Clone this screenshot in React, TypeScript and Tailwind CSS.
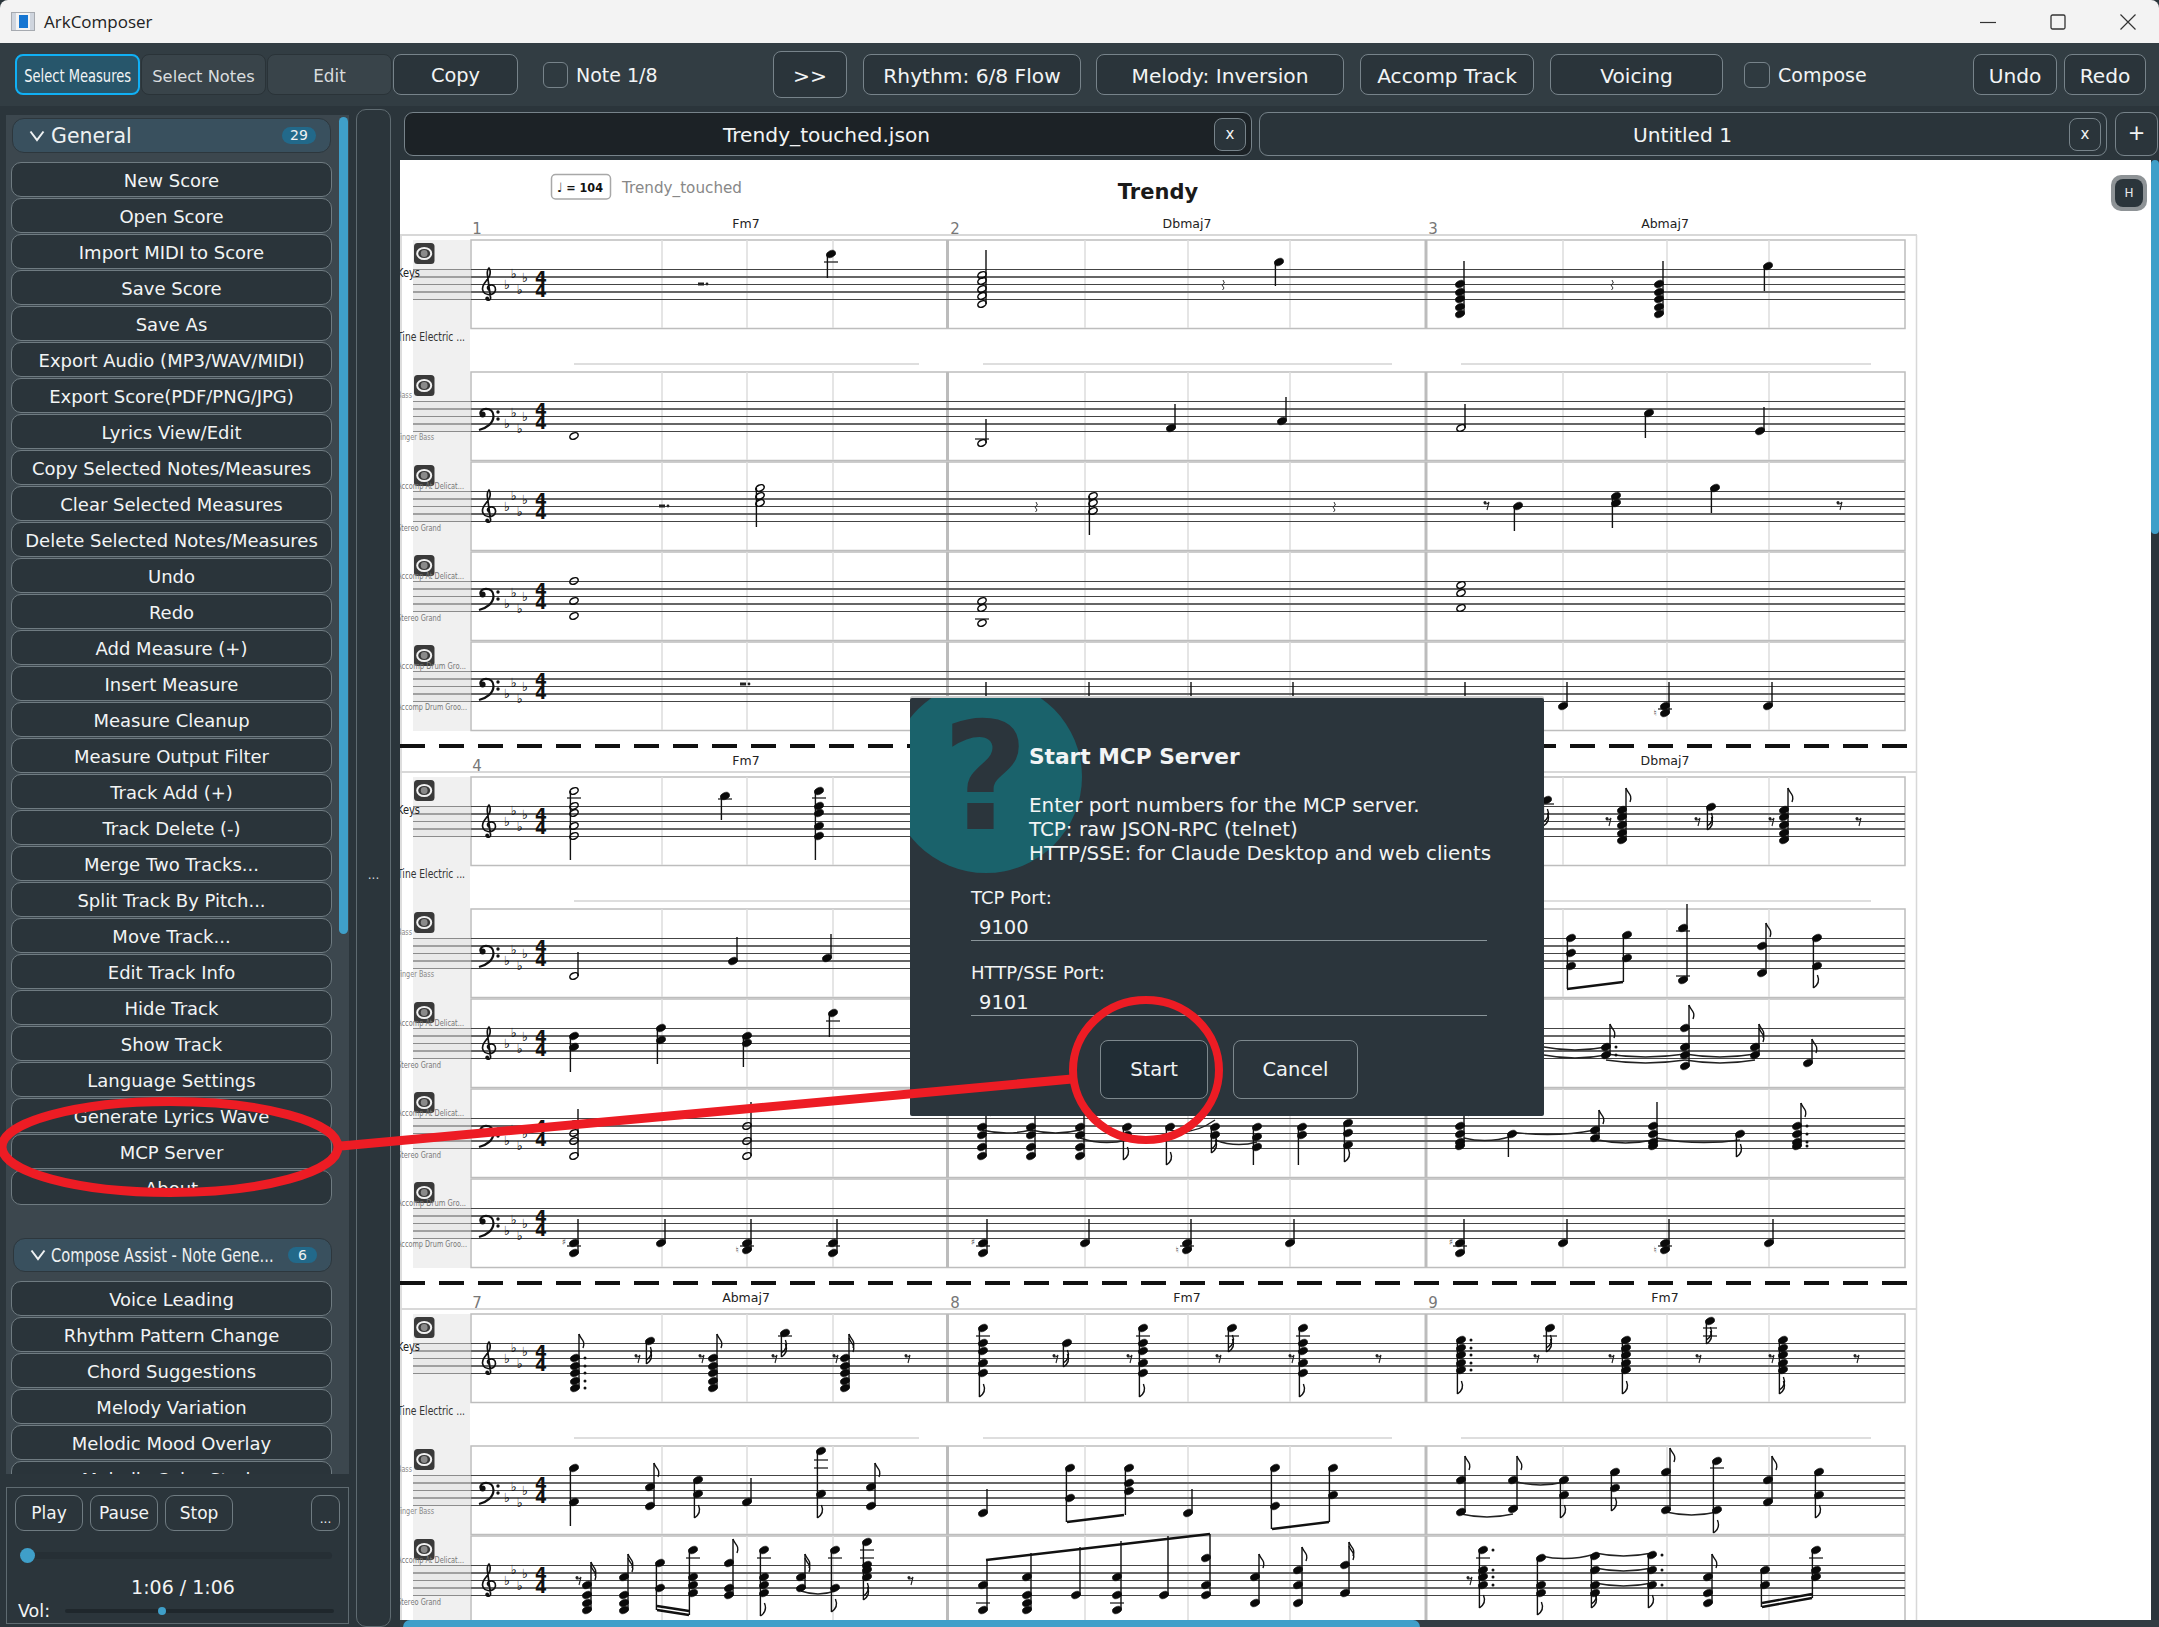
import React from 'react';

// note tuple: x, note ys, stem tip y (0 = no stem), flags, options
type Opt = { o?: number; l?: number[]; d?: number };
type Note = [number, number[], number, number?, Opt?];

const generalItems = [
  'New Score', 'Open Score', 'Import MIDI to Score', 'Save Score', 'Save As', 'Export Audio (MP3/WAV/MIDI)',
  'Export Score(PDF/PNG/JPG)', 'Lyrics View/Edit', 'Copy Selected Notes/Measures', 'Clear Selected Measures',
  'Delete Selected Notes/Measures', 'Undo', 'Redo', 'Add Measure (+)', 'Insert Measure', 'Measure Cleanup',
  'Measure Output Filter', 'Track Add (+)', 'Track Delete (-)', 'Merge Two Tracks...', 'Split Track By Pitch...',
  'Move Track...', 'Edit Track Info', 'Hide Track', 'Show Track', 'Language Settings', 'Generate Lyrics Wave',
  'MCP Server', 'About',
];
const composeItems = ['Voice Leading', 'Rhythm Pattern Change', 'Chord Suggestions', 'Melody Variation', 'Melodic Mood Overlay', 'Melodic Color Study'];

const barBtn = 'h-[41px] flex items-center justify-center rounded-[8px] whitespace-nowrap shrink-0';
const darkBtn = `${barBtn} pt-[3px] border-[1.5px] border-[#77838a] bg-[#2a343a] text-[#f2f4f5] text-[20.2px]`;
const modeBtn = `${barBtn} pt-[5px] border-[1.5px] bg-[#39444a] border-[#2a3338] text-[#d9dddf]`;
const sideBtn = 'h-[35px] mb-[1px] pt-[2px] w-[321px] ml-[5px] flex items-center justify-center rounded-[10px] border-[1.5px] border-[#6f7b81] bg-[#2a343a] text-[#f2f4f5] text-[18px] whitespace-nowrap shrink-0';
const playBtn = 'h-[36px] w-[68px] pt-[1px] flex items-center justify-center rounded-[9px] border-[1.5px] border-[#6f7b81] text-[#f2f4f5] text-[17px]';

// ---- score data, all in page pixels ----
const trackTops = [240, 372, 462, 552, 642];
const sysOffsets = [0, 537, 1074];
const beats = [662, 747, 833, 1085, 1188, 1290, 1563, 1667, 1769];
// upper label, its offset, width; lower label, its offset, width; colour; size
const trackLabels: [string, number, number, string, number, number, string, number][] = [
  ['Keys', 3, 23, 'Tine Electric ...', 67, 68, '#333', 11.5],
  ['Bass', -8, 15, 'Finger Bass', 34, 37, '#888', 8.5],
  ['Accomp At Delicat...', -7, 67, 'Stereo Grand', 35, 44, '#777', 9.5],
  ['Accomp At Delicat...', -7, 67, 'Stereo Grand', 35, 44, '#777', 9.5],
  ['Accomp Drum Gro...', -7, 69, 'Accomp Drum Groo...', 34, 70, '#777', 9.5],
];
const chordNames: [string, number, number][] = [
  ['Fm7', 746, 223], ['Dbmaj7', 1187, 223], ['Abmaj7', 1665, 223],
  ['Fm7', 746, 760], ['Dbmaj7', 1665, 760],
  ['Abmaj7', 746, 1297], ['Fm7', 1187, 1297], ['Fm7', 1665, 1297],
];
const barNumbers: [string, number, number][] = [
  ['1', 477, 228], ['2', 955, 228], ['3', 1433, 228], ['4', 477, 765], ['7', 477, 1302], ['8', 955, 1302], ['9', 1433, 1302],
];
const electricGaps: [number, number][] = [[574, 919], [983, 1392], [1461, 1871]];

const s3a = [1358, 1366, 1373, 1381, 1388];
const s3b = [1328, 1343, 1351, 1363, 1373];
const s3c = [1340, 1348, 1355, 1363, 1370];
const s2c = [1127, 1135, 1147, 1156];
const s2top = [810, 817, 825, 833, 840];

const notes: Note[] = [
  // system 1
  [982, [275, 281, 289, 296, 304], 250, 0, { o: 1 }], [831, [254], 278, 0, { l: [262] }], [1279, [262], 286],
  [1460, [284, 292, 299, 307, 314], 261], [1659, [284, 292, 299, 307, 314], 261], [1768, [266], 291],
  [574, [436], 0, 0, { o: 1 }], [982, [443], 419, 0, { o: 1, l: [439] }], [1171, [428], 404], [1282, [421], 397],
  [1461, [428], 404, 0, { o: 1 }], [1649, [413], 438], [1760, [431], 407],
  [760, [488, 496, 503], 527, 0, { o: 1 }], [1093, [496, 503, 511], 535, 0, { o: 1 }], [1518, [506], 531], [1616, [496, 503], 528], [1715, [488], 513],
  [574, [581, 601, 616], 0, 0, { o: 1 }], [982, [601, 608, 623], 0, 0, { o: 1, l: [619] }], [1461, [585, 593, 608], 0, 0, { o: 1 }],
  [982, [706], 682], [1085, [706], 682], [1187, [706], 682], [1289, [706], 682], [1461, [706], 682],
  [1563, [706], 682], [1665, [706, 713], 682, 0, { l: [709] }], [1768, [706], 682],
  // system 2
  [574, [791, 806, 813, 826, 836], 860, 0, { o: 1, l: [798] }], [725, [796], 820, 0, { l: [799] }], [819, [791, 806, 813, 826, 836], 860, 0, { l: [798] }],
  [1547, [800], 826, 2, { l: [804] }], [1622, s2top, 788, 1], [1711, [807], 830, 2], [1784, s2top, 788, 1],
  [574, [976], 952, 0, { o: 1 }], [733, [961], 937], [827, [958], 934],
  [1571, [938, 953, 966], 989], [1627, [935, 958], 982], [1683, [928, 980], 904, 0, { l: [931, 976] }], [1762, [946, 973], 923, 1], [1817, [938, 966], 988, 1],
  [574, [1036, 1047], 1072], [661, [1028, 1040], 1064], [747, [1036, 1043], 1067], [833, [1013], 1037, 0, { l: [1021] }],
  [1606, [1047, 1055], 1024, 1, { d: 1 }], [1685, [1028, 1047, 1055, 1066], 1005, 1], [1755, [1047, 1055], 1024, 2], [1808, [1063], 1039, 1],
  [574, [1124, 1133, 1141, 1156], 1109, 0, { o: 1 }], [747, [1126, 1141, 1156], 1102, 0, { o: 1 }],
  [982, s2c, 1102, 1], [1031, s2c, 1102], [1080, s2c, 1102], [1127, [1127, 1135], 1160, 1], [1170, [1127], 1165, 1], [1215, [1127, 1135], 1153, 2], [1257, [1127, 1137, 1147], 1165], [1302, [1127, 1135], 1165], [1348, [1123, 1133, 1145], 1162, 1],
  [1460, [1126, 1134, 1142, 1146], 1102, 1], [1512, [1134], 1157], [1595, [1130, 1138], 1110, 1], [1653, [1126, 1134, 1142, 1146], 1102], [1740, [1134], 1157, 1], [1797, [1126, 1134, 1142, 1146], 1103, 1, { d: 1 }],
  [574, [1243, 1253], 1219, 0, { l: [1246] }], [661, [1243], 1219], [747, [1243, 1250], 1219, 0, { l: [1246] }], [833, [1243, 1253], 1219, 0, { l: [1246] }],
  [983, [1243, 1253], 1219, 0, { l: [1246] }], [1085, [1243], 1219], [1187, [1243, 1250], 1219, 0, { l: [1246] }], [1290, [1243], 1219],
  [1460, [1243, 1253], 1219, 0, { l: [1246] }], [1563, [1243], 1219], [1665, [1243, 1250], 1219, 0, { l: [1246] }], [1769, [1243], 1219],
  // system 3
  [575, s3a, 1334, 1, { d: 1 }], [650, [1341], 1364, 2], [713, s3a, 1334, 1], [785, [1333], 1357, 2, { l: [1336] }], [845, s3a, 1334, 2],
  [983, s3b, 1397, 1, { l: [1336] }], [1067, [1343], 1367, 2], [1143, s3b, 1397, 1, { l: [1336] }], [1232, [1328], 1352, 2, { l: [1336] }], [1303, s3b, 1397, 1, { l: [1336] }],
  [1461, s3c, 1394, 1, { d: 1 }], [1550, [1328], 1352, 2, { l: [1336] }], [1626, s3c, 1394, 1], [1710, [1321], 1344, 2, { l: [1328, 1336] }], [1783, s3c, 1394, 2],
  [574, [1468, 1502], 1526], [650, [1487, 1506], 1463, 1], [698, [1480, 1494], 1518, 1], [747, [1502], 1478], [821, [1451, 1494], 1518, 1, { l: [1460, 1468] }], [871, [1487, 1506], 1463, 1],
  [983, [1513], 1489], [1070, [1468, 1498], 1522], [1129, [1468, 1483, 1491], 1515], [1188, [1513], 1489], [1275, [1468, 1506], 1529], [1333, [1468, 1495], 1522],
  [1461, [1480, 1512], 1456, 1], [1513, [1480, 1509], 1456, 1], [1564, [1480, 1495], 1518, 1], [1615, [1472, 1488], 1511, 1], [1666, [1472, 1510], 1448, 1],
  [1717, [1461, 1510], 1533, 1, { l: [1468] }], [1768, [1480, 1502], 1456, 1], [1819, [1472, 1495], 1518, 1],
  [587, [1585, 1595, 1603, 1610], 1562, 2], [624, [1577, 1595, 1603, 1610], 1554, 2], [660, [1563, 1588], 1610], [693, [1550, 1577, 1585, 1593], 1615, 0, { l: [1558] }],
  [729, [1563, 1588, 1595], 1539, 1], [764, [1550, 1577, 1585, 1593], 1616, 1, { l: [1558] }], [801, [1577, 1588], 1554, 2], [835, [1550, 1588], 1612, 1, { l: [1558] }], [867, [1542, 1565, 1570, 1577], 1600, 2, { l: [1550, 1558] }],
  [983, [1585, 1610], 1560, 0, { l: [1603] }], [1027, [1577, 1595, 1603, 1610], 1553], [1076, [1595], 1547], [1117, [1577, 1595, 1610], 1541, 0, { l: [1603] }], [1164, [1595], 1536], [1206, [1558, 1585, 1595], 1534],
  [1255, [1577, 1603], 1554, 1], [1298, [1570, 1585, 1603], 1547, 1], [1345, [1565, 1593], 1542, 2],
  [1483, [1550, 1570, 1577, 1585], 1608, 1, { l: [1558], d: 1 }], [1541, [1558, 1585, 1593], 1615, 1], [1595, [1556, 1570, 1585, 1593], 1608, 2], [1652, [1555, 1570, 1585], 1608, 1, { d: 1 }],
  [1708, [1577, 1593, 1603], 1554, 1], [1765, [1570, 1585], 1607], [1816, [1550, 1570, 1577], 1598, 0, { l: [1558] }],
];

const beams: number[][] = [
  [1567, 989, 1623, 982], [1067, 1522, 1124, 1515], [1272, 1529, 1329, 1522],
  [657, 1610, 689, 1615], [657, 1606, 689, 1611], [986, 1560, 1210, 1534], [1762, 1607, 1812, 1598], [1762, 1603, 1812, 1594],
];
const ties: number[][] = [
  [982, 1130, 1031, 1130], [1031, 1130, 1080, 1130], [1080, 1138, 1127, 1140], [1170, 1130, 1215, 1120], [1215, 1140, 1257, 1142],
  [1464, 1138, 1512, 1136], [1512, 1132, 1595, 1130], [1598, 1140, 1653, 1140], [1656, 1138, 1740, 1140],
  [1544, 1047, 1606, 1047], [1544, 1055, 1606, 1055], [1606, 1054, 1685, 1054], [1606, 1060, 1685, 1060], [1685, 1054, 1755, 1054], [1685, 1060, 1755, 1060],
  [1461, 1514, 1513, 1514], [1517, 1482, 1564, 1482], [1666, 1512, 1717, 1512], [801, 1591, 835, 1591],
  [1541, 1556, 1595, 1554], [1595, 1553, 1652, 1553], [1595, 1568, 1652, 1568], [1595, 1583, 1652, 1583],
];
const eighthRests: [number, number][] = [
  [1487, 505], [1840, 505], [1609, 821], [1698, 821], [1772, 821], [1859, 821],
  [638, 1358], [702, 1358], [775, 1358], [836, 1358], [908, 1358], [1056, 1358], [1130, 1358], [1219, 1358], [1292, 1358], [1379, 1358],
  [1537, 1358], [1612, 1358], [1699, 1358], [1772, 1358], [1857, 1358], [579, 1580], [911, 1580], [1470, 1580],
];
const smallRests: [number, number][] = [[1223, 285], [1612, 285], [1036, 507], [1334, 507]];
const dotRests: [number, number][] = [[703, 284], [745, 684], [664, 506]];
const marks: [string, number, number][] = [
  ['♯', 564, 1245], ['♮', 737, 1253], ['♯', 973, 1245], ['♮', 1177, 1253], ['♯', 1451, 1245], ['♮', 1655, 1253], ['♮', 1655, 716],
];

const TrebleClef = ({ x, y }: { x: number; y: number }) => (
  <g transform={`translate(${x} ${y})`}>
    <path d="M9.5 24 C6.5 24 5.5 20.5 8 19 C11.5 17 15 20 14.5 23.5 C14 27 10.5 28.5 7 28 C2.5 27.5 .5 23.5 2 19.5 C3.5 15.5 7 13 8.5 9.5 C9.5 7 9.5 3 8 1.5 C6.5 3 6 6 6.5 9 L9.5 31 C10 34 6.5 34.5 5.5 32.5" fill="none" stroke="#111" strokeWidth="1.7" />
    <circle cx="6.2" cy="32" r="1.9" fill="#111" />
  </g>
);

const BassClef = ({ x, y }: { x: number; y: number }) => (
  <g transform={`translate(${x} ${y})`}>
    <path d="M1 22 C9 20 15.5 15 15.5 8 C15.5 3 12 .8 8 .8 C4.5 .8 2 3 2.5 6" fill="none" stroke="#111" strokeWidth="2.2" />
    <circle cx="4.6" cy="6.4" r="3" fill="#111" />
    <circle cx="20" cy="4" r="1.7" fill="#111" />
    <circle cx="20" cy="11" r="1.7" fill="#111" />
  </g>
);

const Eye = ({ y }: { y: number }) => (
  <g>
    <rect x="414" y={y} width="20.5" height="21" rx="3.5" fill="#3a3a3a" />
    <ellipse cx="424.2" cy={y + 10.5} rx="7" ry="5.6" fill="none" stroke="#f2f2f2" strokeWidth="2" />
    <circle cx="424.2" cy={y + 10.5} r="3.4" fill="#8a8a8a" />
  </g>
);

const NoteGlyph = ({ n }: { n: Note }) => {
  const [x, ys, tip, flags = 0, opt = {}] = n;
  const up = tip !== 0 && tip < ys[0];
  const sx = up ? x + 4 : x - 3.6;
  const far = up ? ys[ys.length - 1] : ys[0];
  return (
    <g>
      {(opt.l || []).map((l, i) => <line key={i} x1={x - 7} x2={x + 7} y1={l} y2={l} stroke="#333" strokeWidth="1.4" />)}
      {tip !== 0 && <line x1={sx} x2={sx} y1={far} y2={tip} stroke="#111" strokeWidth="1.4" />}
      {Array.from({ length: flags }).map((_, i) => {
        const t = up ? tip + i * 4 : tip - i * 4;
        const d = up
          ? `M${sx} ${t} C${sx + 1} ${t + 5} ${sx + 7} ${t + 6} ${sx + 4} ${t + 14}`
          : `M${sx} ${t} C${sx + 3} ${t - 2} ${sx + 7} ${t - 6} ${sx + 4} ${t - 13}`;
        return <path key={i} d={d} fill="none" stroke="#111" strokeWidth="1.4" />;
      })}
      {ys.map((y, i) => (
        <ellipse key={i} cx={x} cy={y} rx={opt.o ? 4.4 : 4.8} ry={opt.o ? 3 : 3.3} transform={`rotate(-25 ${x} ${y})`}
          fill={opt.o ? 'none' : '#0a0a0a'} stroke="#0a0a0a" strokeWidth={opt.o ? 1.5 : 0.6} />
      ))}
      {opt.d && ys.map((y, i) => <circle key={i} cx={x + 10} cy={y} r="1.5" fill="#111" />)}
    </g>
  );
};

const ScoreSheet = () => (
  <svg width="1751" height="1460" viewBox="400 160 1751 1460" className="block bg-white" style={{ fontFamily: "'DejaVu Sans', sans-serif" }}>
    <rect x="551.5" y="174.5" width="59" height="24.5" rx="4" fill="#fff" stroke="#a8a8a8" strokeWidth="1.5" />
    <text x="557" y="192" fontSize="13" fontWeight="700" fill="#111" textLength="46" lengthAdjust="spacingAndGlyphs">♩ = 104</text>
    <text x="622" y="193" fontSize="15.5" fill="#888" textLength="120" lengthAdjust="spacingAndGlyphs">Trendy_touched</text>
    <text x="1158" y="199" fontSize="21" fontWeight="700" fill="#1a1a1a" textAnchor="middle">Trendy</text>

    <line x1="401" x2="401" y1="235" y2="1620" stroke="#d2d2d2" strokeWidth="1.5" />
    <line x1="1916.5" x2="1916.5" y1="235" y2="1620" stroke="#d8d8d8" strokeWidth="1.5" />
    <line x1="400" x2="1917" y1="746" y2="746" stroke="#111" strokeWidth="4" strokeDasharray="25 14" />
    <line x1="400" x2="1917" y1="1283" y2="1283" stroke="#111" strokeWidth="4" strokeDasharray="25 14" />

    {sysOffsets.map((off) => (
      <g key={off}>
        <line x1="400" x2="1917" y1={235 + off} y2={235 + off} stroke="#d8d8d8" strokeWidth="2" />
        <rect x="413" y={240 + off} width="57" height="491" fill="#f0f0f0" />
        {electricGaps.map(([a, b]) => <line key={a} x1={a} x2={b} y1={364 + off} y2={364 + off} stroke="#dedede" strokeWidth="2" />)}
        {trackTops.map((t, ti) => {
          const top = t + off;
          const s = top + 29.5;
          const treble = ti === 0 || ti === 2;
          const [a, aOff, aLen, b, bOff, bLen, col, fs] = trackLabels[ti];
          return (
            <g key={t}>
              <rect x="413" y={s} width="58" height="30" fill="#e3e3e3" />
              <rect x="471" y={top} width="1434" height="88.5" fill="#fff" stroke="#bdbdbd" strokeWidth="1.5" />
              {beats.map((bx) => <line key={bx} x1={bx} x2={bx} y1={top} y2={top + 88} stroke="#dcdcdc" strokeWidth="1.5" />)}
              <line x1="947.5" x2="947.5" y1={top} y2={top + 88} stroke="#bcbcbc" strokeWidth="3" />
              <line x1="1426" x2="1426" y1={top} y2={top + 88} stroke="#bcbcbc" strokeWidth="3" />
              {[0, 1, 2, 3, 4].map((l) => (
                <line key={l} x1="413" x2="1905" y1={s + l * 7.5} y2={s + l * 7.5} stroke={l % 2 ? '#666' : '#444'} strokeWidth={l % 2 ? 1.9 : 1.2} />
              ))}
              <rect x="413" y={s - 1} width="58" height="32" fill="#f0f0f0" opacity="0.42" />
              {treble ? <TrebleClef x={481} y={s - 3} /> : <BassClef x={478} y={s + 6.5} />}
              {(treble ? [4, 8, 15, 20] : [11.5, 15.5, 22.5, 27.5]).map((dy, i) => (
                <text key={i} x={[513.6, 525, 507, 519.6][i]} y={s + dy + 4} fontSize="12.5" fill="#000" textAnchor="middle">♭</text>
              ))}
              <text x="541" y={s + 14.5} fontSize="17" fontWeight="700" fill="#111" textAnchor="middle">4</text>
              <text x="541" y={s + 27.5} fontSize="17" fontWeight="700" fill="#111" textAnchor="middle">4</text>
              <Eye y={top + 3} />
              <text x="397" y={s + aOff + 4} fontSize={ti === 1 ? 8.5 : ti === 0 ? 11.5 : fs} fill={ti === 0 ? '#222' : col} textLength={aLen} lengthAdjust="spacingAndGlyphs">{a}</text>
              <text x="397" y={s + bOff + 4} fontSize={fs} fill={col} textLength={bLen} lengthAdjust="spacingAndGlyphs">{b}</text>
            </g>
          );
        })}
      </g>
    ))}

    {chordNames.map(([t, x, y], i) => <text key={i} x={x} y={y + 4.5} fontSize="12.5" fill="#222" textAnchor="middle">{t}</text>)}
    {barNumbers.map(([t, x, y], i) => <text key={i} x={x} y={y + 5.5} fontSize="15" fill="#777" textAnchor="middle">{t}</text>)}

    {ties.map(([a, b, c, d], i) => <path key={i} d={`M${a} ${b} Q${(a + c) / 2} ${Math.max(b, d) + 6} ${c} ${d}`} fill="none" stroke="#222" strokeWidth="1.4" />)}
    {beams.map(([a, b, c, d], i) => <line key={i} x1={a} y1={b} x2={c} y2={d} stroke="#111" strokeWidth="2.4" />)}
    {notes.map((n, i) => <NoteGlyph key={i} n={n} />)}
    {eighthRests.map(([x, y], i) => (
      <g key={i}>
        <circle cx={x - 2} cy={y - 2.5} r="1.5" fill="#222" />
        <path d={`M${x - 3} ${y - 1.5} Q${x} ${y} ${x + 2} ${y - 3} L${x} ${y + 5}`} fill="none" stroke="#222" strokeWidth="1.1" />
      </g>
    ))}
    {smallRests.map(([x, y], i) => <path key={i} d={`M${x} ${y - 5} L${x + 1.4} ${y - 2} L${x - 1} ${y} L${x + 1} ${y + 3} L${x - .5} ${y + 5}`} fill="none" stroke="#333" strokeWidth="1" />)}
    {dotRests.map(([x, y], i) => (
      <g key={i}><rect x={x - 5} y={y - 1.5} width="6" height="3" fill="#222" /><circle cx={x + 4} cy={y} r="1.4" fill="#222" /></g>
    ))}
    {marks.map(([t, x, y], i) => <text key={i} x={x} y={y} fontSize="9" fill="#444" textAnchor="middle">{t}</text>)}
  </svg>
);

const Dialog = () => (
  <div className="absolute left-[910px] top-[698px] w-[634px] h-[418px] bg-[#2b353c] rounded-[2px] shadow-[0_-2px_0_#cfcfcf] overflow-hidden text-[#f2f4f5]">
    <div className="absolute left-[-20px] top-[-17px] w-[192px] h-[192px] rounded-full bg-[#1a626b]" />
    <div className="absolute left-[32px] top-[-10px] text-[149px] leading-[180px] font-bold text-[#2b353c]">?</div>
    <div className="relative pl-[119px] pt-[46px]">
      <div className="text-[21.7px] leading-[26px] font-bold whitespace-nowrap">Start MCP Server</div>
      <div className="mt-[24px] text-[19.9px] leading-[24px] whitespace-nowrap">
        <div>Enter port numbers for the MCP server.</div>
        <div>TCP: raw JSON-RPC (telnet)</div>
        <div>HTTP/SSE: for Claude Desktop and web clients</div>
      </div>
    </div>
    <div className="relative ml-[61px] w-[516px] mt-[21px] text-[18px]">
      <div className="leading-[22px]">TCP Port:</div>
      <div className="mt-[8px] h-[23px] leading-[22px] text-[19.5px] pl-[8px] border-b-[1.5px] border-[#8a959a] box-content">9100</div>
      <div className="mt-[21px] leading-[22px]">HTTP/SSE Port:</div>
      <div className="mt-[8px] h-[23px] leading-[22px] text-[19.5px] pl-[8px] border-b-[1.5px] border-[#8a959a] box-content">9101</div>
    </div>
    <div className="relative flex ml-[190px] mt-[24px] gap-[25px] text-[19.5px]">
      <div className="w-[108px] h-[59px] flex items-center justify-center rounded-[8px] border-[1.5px] border-[#7d888d] bg-[#212d35]">Start</div>
      <div className="w-[125px] h-[59px] flex items-center justify-center rounded-[8px] border-[1.5px] border-[#7d888d]">Cancel</div>
    </div>
  </div>
);

export default function App() {
  return (
    <div className="relative w-[2159px] h-[1627px] overflow-hidden bg-[#2b353b] flex flex-col font-['DejaVu_Sans',sans-serif]">
      {/* title bar */}
      <div className="h-[43px] shrink-0 bg-[#f3f3f3] rounded-t-[8px] flex items-center pl-[11px] font-['Open_Sans',sans-serif] text-[#222]">
        <svg width="24" height="19" viewBox="0 0 24 19">
          <rect x=".5" y=".5" width="23" height="18" fill="#f4f4f4" stroke="#a6aab0" />
          <rect x="1" y="1" width="4" height="17" fill="#cfd5de" />
          <rect x="19" y="1" width="4" height="17" fill="#cfd5de" />
          <rect x="8" y="3" width="9" height="13" fill="#1676d2" />
        </svg>
        <span className="ml-[9px] text-[17px]">ArkComposer</span>
        <div className="ml-auto mr-[-4px] flex">
          <div className="w-[70px] flex justify-center">
            <svg width="16" height="16" viewBox="0 0 16 16"><line x1="0" x2="16" y1="8.5" y2="8.5" stroke="#333" strokeWidth="1.2" /></svg>
          </div>
          <div className="w-[70px] flex justify-center">
            <svg width="16" height="16" viewBox="0 0 16 16"><rect x="1" y="1" width="14" height="14" rx="1.5" fill="none" stroke="#333" strokeWidth="1.3" /></svg>
          </div>
          <div className="w-[70px] flex justify-center">
            <svg width="16" height="16" viewBox="0 0 16 16"><path d="M.5 .5 L15.5 15.5 M15.5 .5 L.5 15.5" stroke="#333" strokeWidth="1.2" /></svg>
          </div>
        </div>
      </div>

      {/* toolbar */}
      <div className="h-[64px] shrink-0 bg-[#323d43] border-b border-[#2b353b] flex items-center pl-[15px]">
        <div className={`${barBtn} pt-[3px] w-[125px] bg-[#27566b] border-2 border-[#10b0f5] text-[#f2f4f5] text-[17.8px]`}>
          <span className="inline-block scale-x-[0.735]">Select Measures</span>
        </div>
        <div className={`${modeBtn} w-[125px] ml-[1px] text-[16.3px]`}>Select Notes</div>
        <div className={`${modeBtn} w-[125px] ml-[1px] text-[16.8px]`}>Edit</div>
        <div className={`${barBtn} pt-[3px] border-[1.5px] border-[#77838a] bg-[#2a343a] text-[#f2f4f5] w-[125px] ml-[1px] text-[19.4px]`}>Copy</div>
        <div className="ml-[25px] w-[25px] h-[26px] rounded-[6px] border-[1.5px] border-[#77838a] bg-[#2f3a40] shrink-0" />
        <span className="ml-[8px] w-[81px] pt-[2px] text-[19px] text-[#f2f4f5] whitespace-nowrap">Note 1/8</span>
        <div className={`${darkBtn} w-[74px] h-[47px] ml-[116px]`}>{'>>'}</div>
        <div className={`${darkBtn} w-[218px] ml-[16px]`}>Rhythm: 6/8 Flow</div>
        <div className={`${darkBtn} w-[248px] ml-[15px]`}>Melody: Inversion</div>
        <div className={`${darkBtn} w-[174px] ml-[16px]`}>Accomp Track</div>
        <div className={`${darkBtn} w-[173px] ml-[16px]`}>Voicing</div>
        <div className="ml-[21px] w-[26px] h-[26px] rounded-[6px] border-[1.5px] border-[#77838a] bg-[#2f3a40] shrink-0" />
        <span className="ml-[8px] w-[86px] pt-[2px] text-[19px] text-[#f2f4f5] whitespace-nowrap">Compose</span>
        <div className={`${darkBtn} w-[84px] ml-[109px]`}>Undo</div>
        <div className={`${darkBtn} w-[82px] ml-[7px]`}>Redo</div>
      </div>

      <div className="flex flex-1 min-h-0">
        {/* left panel */}
        <div className="w-[350px] shrink-0 pl-[6px] pt-[8px] flex flex-col">
          <div className="h-[1359px] w-[343px] bg-[#3c474e] flex overflow-hidden">
            <div className="w-[333px] shrink-0 pt-[3px] flex flex-col">
              <div className="h-[35px] w-[319px] ml-[6px] rounded-[12px] border-[1.5px] border-[#2d373d] bg-[#39505e] flex items-center pl-[16px] pr-[14px] text-[#eef1f2] shrink-0">
                <svg width="16" height="12" viewBox="0 0 16 12"><path d="M1.5 1.5 L8 10 L14.5 1.5" fill="none" stroke="#eef1f2" strokeWidth="2" /></svg>
                <span className="ml-[6px] pt-[2px] text-[20.5px]">General</span>
                <span className="ml-auto w-[34px] h-[17px] rounded-full bg-[#22698a] text-[14px] flex items-center justify-center">29</span>
              </div>
              <div className="h-[9px] shrink-0" />
              {generalItems.map((t) => <div key={t} className={sideBtn}>{t}</div>)}
              <div className="h-[32px] shrink-0" />
              <div className="h-[34px] w-[319px] ml-[7px] rounded-[12px] border-[1.5px] border-[#2d373d] bg-[#39505e] flex items-center pl-[16px] pr-[14px] text-[#eef1f2] shrink-0">
                <svg width="16" height="12" viewBox="0 0 16 12" className="shrink-0"><path d="M1.5 1.5 L8 10 L14.5 1.5" fill="none" stroke="#eef1f2" strokeWidth="2" /></svg>
                <span className="ml-[5px] pt-[1px] w-[224px] inline-block text-[20.1px] whitespace-nowrap origin-left scale-x-[0.73]">Compose Assist - Note Gene...</span>
                <span className="ml-auto w-[29px] h-[16px] rounded-full bg-[#22698a] text-[14px] flex items-center justify-center shrink-0">6</span>
              </div>
              <div className="h-[9px] shrink-0" />
              {composeItems.map((t) => <div key={t} className={sideBtn}>{t}</div>)}
            </div>
            <div className="w-[10px] pt-[2px]">
              <div className="w-[9px] h-[817px] rounded-full bg-[#3f9fc9]" />
            </div>
          </div>

          {/* player */}
          <div className="mt-[13px] h-[137px] w-[343px] border-[1.5px] border-[#5f6b71] px-[8px] pt-[7px] flex flex-col text-[#f2f4f5]">
            <div className="flex gap-[7px] h-[36px]">
              <div className={playBtn}>Play</div>
              <div className={playBtn}>Pause</div>
              <div className={playBtn}>Stop</div>
              <div className="ml-auto w-[29px] h-[36px] flex items-end justify-center pb-[5px] rounded-[9px] border-[1.5px] border-[#6f7b81] text-[12px] leading-none">...</div>
            </div>
            <div className="mt-[17px] h-[15px] ml-[5px] w-[312px] flex items-center bg-transparent relative">
              <div className="h-[7px] w-full rounded-full bg-[#262f35]" />
              <div className="absolute left-0 w-[15px] h-[15px] rounded-full bg-[#3f9fc9]" />
            </div>
            <div className="mt-[12px] h-[24px] text-center text-[19px] leading-[24px] pl-[11px]">1:06 / 1:06</div>
            <div className="flex items-center h-[24px]">
              <span className="ml-[3px] text-[17.5px] w-[47px]">Vol:</span>
              <div className="relative flex items-center h-[8px] w-[269px]">
                <div className="h-[4px] w-full rounded-full bg-[#1f272c]" />
                <div className="absolute left-[93px] w-[8px] h-[8px] rounded-full bg-[#3f9fc9]" />
              </div>
            </div>
          </div>
        </div>

        {/* splitter */}
        <div className="ml-[6px] mt-[2px] w-[35px] shrink-0 rounded-t-[10px] rounded-b-[10px] border-[1.5px] border-[#5f6b71] flex items-center justify-center">
          <span className="text-[#d5dadc] text-[12px] mt-[14px]">...</span>
        </div>

        {/* tabs and score */}
        <div className="ml-[9px] flex-1 min-w-0 flex flex-col relative">
          <div className="h-[53px] pt-[5px] pl-[4px] flex shrink-0">
            <div className="w-[848px] h-[44px] rounded-[9px] border-[1.5px] border-[#77838a] bg-[#1c2226] flex items-center text-[#f2f4f5] text-[20.2px]">
              <span className="flex-1 text-center pl-[34px] pt-[2px]">Trendy_touched.json</span>
              <span className="w-[32px] h-[33px] mr-[5px] rounded-[8px] border-[1.5px] border-[#77838a] flex items-center justify-center text-[15px] bg-[#2a343a]">x</span>
            </div>
            <div className="ml-[7px] w-[848px] h-[44px] rounded-[9px] border-[1.5px] border-[#77838a] bg-[#2a343a] flex items-center text-[#f2f4f5] text-[20.2px]">
              <span className="flex-1 text-center pl-[36px] pt-[2px]">Untitled 1</span>
              <span className="w-[32px] h-[33px] mr-[5px] rounded-[8px] border-[1.5px] border-[#77838a] flex items-center justify-center text-[15px]">x</span>
            </div>
            <div className="ml-[8px] w-[43px] h-[44px] rounded-[9px] border-[1.5px] border-[#77838a] flex items-center justify-center text-[#f2f4f5] text-[21px]">+</div>
          </div>
          <div className="flex relative">
            <ScoreSheet />
            <div className="w-[8px] bg-[#2b353b]">
              <div className="h-[374px] rounded-full bg-[#3f9fc9]" />
            </div>
            {/* floating H button */}
            <div className="absolute left-[1711px] top-[15px] w-[36px] h-[36px] rounded-[10px] bg-[#8e9396] flex items-center justify-center">
              <div className="w-[28px] h-[28px] rounded-[8px] bg-[#2b353b] text-[#e8ebec] text-[12px] flex items-center justify-center">H</div>
            </div>
          </div>
          <div className="h-[7px] bg-[#323d43]">
            <div className="ml-[3px] h-[7px] w-[1017px] rounded-t-full bg-[#3f9fc9]" />
          </div>
        </div>
      </div>

      <Dialog />

      {/* red annotation drawn over the screenshot */}
      <svg className="absolute inset-0 pointer-events-none" width="2159" height="1627" viewBox="0 0 2159 1627">
        <ellipse cx="170" cy="1147" rx="168" ry="45.5" fill="none" stroke="#ed1c24" strokeWidth="9" />
        <line x1="341" y1="1146" x2="1072" y2="1079" stroke="#ed1c24" strokeWidth="9" />
        <ellipse cx="1146" cy="1070" rx="73" ry="70" fill="none" stroke="#ed1c24" strokeWidth="8" />
      </svg>
    </div>
  );
}
